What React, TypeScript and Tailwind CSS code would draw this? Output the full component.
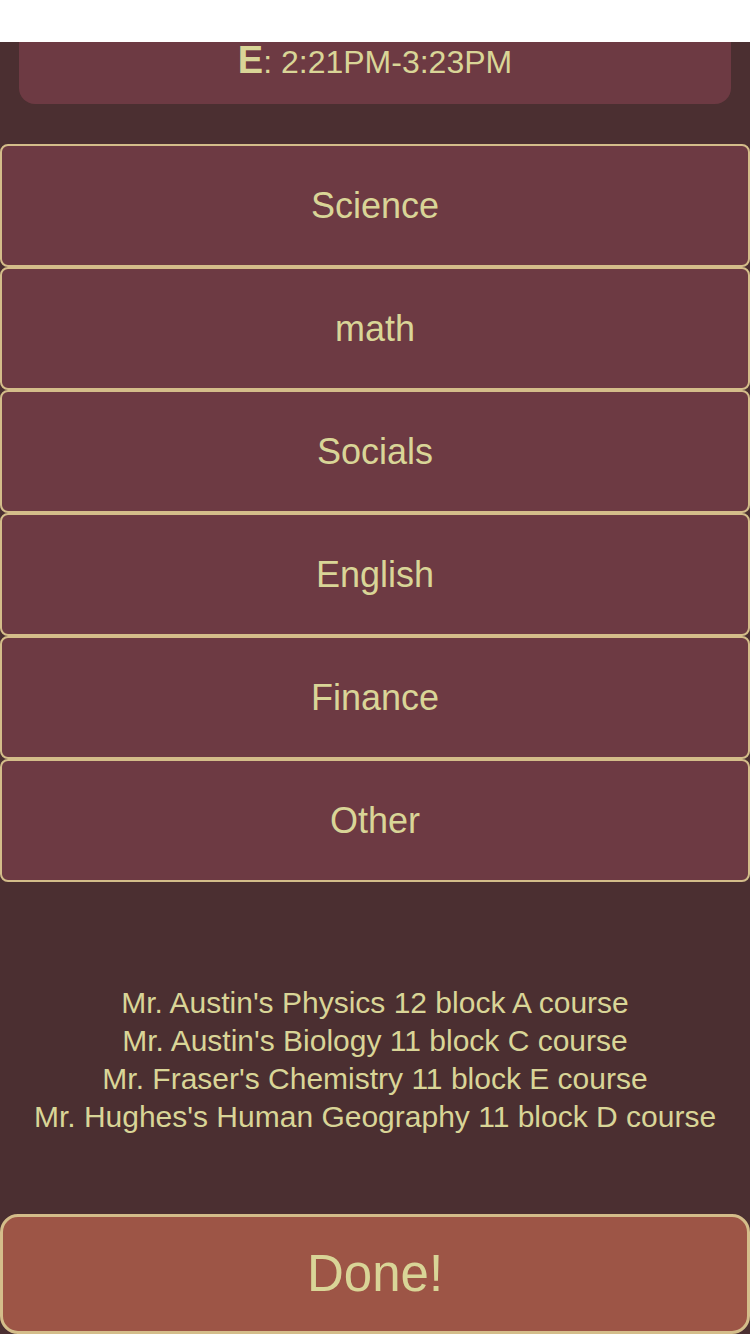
import React from "react";

const categories = ["Science", "math", "Socials", "English", "Finance", "Other"];
const courses = [
  "Mr. Austin's Physics 12 block A course",
  "Mr. Austin's Biology 11 block C course",
  "Mr. Fraser's Chemistry 11 block E course",
  "Mr. Hughes's Human Geography 11 block D course",
];

export default function App() {
  return (
    <div
      className="w-[750px] h-[1334px] overflow-hidden bg-[#4b2f31] text-[#d9d597]"
      style={{ fontFamily: '"Liberation Sans", Arial, Helvetica, sans-serif' }}
    >
      <div className="h-[42px] bg-white" />
      <div className="mx-[19px] rounded-b-[16px] bg-[#6d3a43] pb-[26px] text-center">
        <div className="h-[36px] leading-[36px] whitespace-nowrap">
          <span className="text-[38px] font-bold">E</span>
          <span className="text-[32px]">: 2:21PM-3:23PM</span>
        </div>
      </div>
      <div className="mt-[40px] flex flex-col">
        {categories.map((c) => (
          <div
            key={c}
            className="flex h-[123px] items-center justify-center rounded-[8px] border-2 border-[#d4bd8a] bg-[#6d3a43] text-[36px]"
          >
            {c}
          </div>
        ))}
      </div>
      <div className="mt-[102px] flex flex-col items-center text-[30px] leading-[38px]">
        {courses.map((c) => (
          <div key={c}>{c}</div>
        ))}
      </div>
      <div className="mt-[78px] flex h-[120px] items-center justify-center rounded-[18px] border-[3px] border-[#d4bd8a] bg-[#9d5546] text-[51px]">
        Done!
      </div>
    </div>
  );
}
